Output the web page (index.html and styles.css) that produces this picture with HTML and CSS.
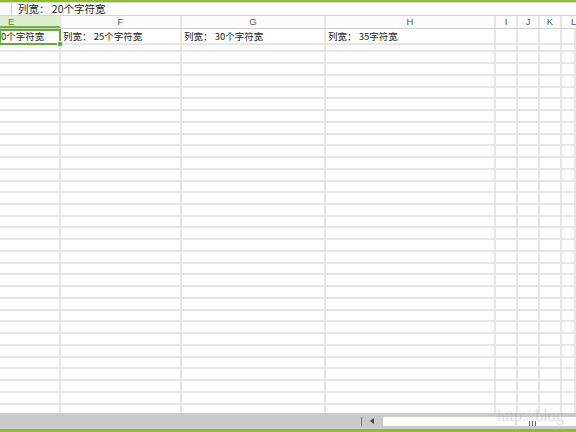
FILE: index.html
```html
<!DOCTYPE html>
<html>
<head>
<meta charset="utf-8">
<link rel="stylesheet" href="styles.css">
</head>
<body>
<div class="app">
  <div class="topbar"></div>
  <div class="formula">
    <div class="fx-left"></div>
    <div class="fx-text">列宽：&nbsp;20个字符宽</div>
  </div>
  <div class="header cols">
    <div class="hc active">E</div><div class="hc">F</div><div class="hc">G</div><div class="hc">H</div><div class="hc">I</div><div class="hc">J</div><div class="hc">K</div><div class="hc last">L</div>
  </div>
  <div class="sheet">
    <div class="row first cols">
      <div class="c sel">0个字符宽<span class="handle"></span></div><div class="c">列宽：&nbsp;25个字符宽</div><div class="c">列宽：&nbsp;30个字符宽</div><div class="c">列宽：&nbsp;35字符宽</div><div class="c"></div><div class="c"></div><div class="c"></div><div class="c"></div>
    </div>
    <div class="row cols"><div class="c"></div><div class="c"></div><div class="c"></div><div class="c"></div><div class="c"></div><div class="c"></div><div class="c"></div><div class="c"></div></div>
    <div class="row cols"><div class="c"></div><div class="c"></div><div class="c"></div><div class="c"></div><div class="c"></div><div class="c"></div><div class="c"></div><div class="c"></div></div>
    <div class="row cols"><div class="c"></div><div class="c"></div><div class="c"></div><div class="c"></div><div class="c"></div><div class="c"></div><div class="c"></div><div class="c"></div></div>
    <div class="row cols"><div class="c"></div><div class="c"></div><div class="c"></div><div class="c"></div><div class="c"></div><div class="c"></div><div class="c"></div><div class="c"></div></div>
    <div class="row cols"><div class="c"></div><div class="c"></div><div class="c"></div><div class="c"></div><div class="c"></div><div class="c"></div><div class="c"></div><div class="c"></div></div>
    <div class="row cols"><div class="c"></div><div class="c"></div><div class="c"></div><div class="c"></div><div class="c"></div><div class="c"></div><div class="c"></div><div class="c"></div></div>
    <div class="row cols"><div class="c"></div><div class="c"></div><div class="c"></div><div class="c"></div><div class="c"></div><div class="c"></div><div class="c"></div><div class="c"></div></div>
    <div class="row cols"><div class="c"></div><div class="c"></div><div class="c"></div><div class="c"></div><div class="c"></div><div class="c"></div><div class="c"></div><div class="c"></div></div>
    <div class="row cols"><div class="c"></div><div class="c"></div><div class="c"></div><div class="c"></div><div class="c"></div><div class="c"></div><div class="c"></div><div class="c"></div></div>
    <div class="row cols"><div class="c"></div><div class="c"></div><div class="c"></div><div class="c"></div><div class="c"></div><div class="c"></div><div class="c"></div><div class="c"></div></div>
    <div class="row cols"><div class="c"></div><div class="c"></div><div class="c"></div><div class="c"></div><div class="c"></div><div class="c"></div><div class="c"></div><div class="c"></div></div>
    <div class="row cols"><div class="c"></div><div class="c"></div><div class="c"></div><div class="c"></div><div class="c"></div><div class="c"></div><div class="c"></div><div class="c"></div></div>
    <div class="row cols"><div class="c"></div><div class="c"></div><div class="c"></div><div class="c"></div><div class="c"></div><div class="c"></div><div class="c"></div><div class="c"></div></div>
    <div class="row cols"><div class="c"></div><div class="c"></div><div class="c"></div><div class="c"></div><div class="c"></div><div class="c"></div><div class="c"></div><div class="c"></div></div>
    <div class="row cols"><div class="c"></div><div class="c"></div><div class="c"></div><div class="c"></div><div class="c"></div><div class="c"></div><div class="c"></div><div class="c"></div></div>
    <div class="row cols"><div class="c"></div><div class="c"></div><div class="c"></div><div class="c"></div><div class="c"></div><div class="c"></div><div class="c"></div><div class="c"></div></div>
    <div class="row cols"><div class="c"></div><div class="c"></div><div class="c"></div><div class="c"></div><div class="c"></div><div class="c"></div><div class="c"></div><div class="c"></div></div>
    <div class="row cols"><div class="c"></div><div class="c"></div><div class="c"></div><div class="c"></div><div class="c"></div><div class="c"></div><div class="c"></div><div class="c"></div></div>
    <div class="row cols"><div class="c"></div><div class="c"></div><div class="c"></div><div class="c"></div><div class="c"></div><div class="c"></div><div class="c"></div><div class="c"></div></div>
    <div class="row cols"><div class="c"></div><div class="c"></div><div class="c"></div><div class="c"></div><div class="c"></div><div class="c"></div><div class="c"></div><div class="c"></div></div>
    <div class="row cols"><div class="c"></div><div class="c"></div><div class="c"></div><div class="c"></div><div class="c"></div><div class="c"></div><div class="c"></div><div class="c"></div></div>
    <div class="row cols"><div class="c"></div><div class="c"></div><div class="c"></div><div class="c"></div><div class="c"></div><div class="c"></div><div class="c"></div><div class="c"></div></div>
    <div class="row cols"><div class="c"></div><div class="c"></div><div class="c"></div><div class="c"></div><div class="c"></div><div class="c"></div><div class="c"></div><div class="c"></div></div>
    <div class="row cols"><div class="c"></div><div class="c"></div><div class="c"></div><div class="c"></div><div class="c"></div><div class="c"></div><div class="c"></div><div class="c"></div></div>
    <div class="row cols"><div class="c"></div><div class="c"></div><div class="c"></div><div class="c"></div><div class="c"></div><div class="c"></div><div class="c"></div><div class="c"></div></div>
    <div class="row cols"><div class="c"></div><div class="c"></div><div class="c"></div><div class="c"></div><div class="c"></div><div class="c"></div><div class="c"></div><div class="c"></div></div>
    <div class="row cols"><div class="c"></div><div class="c"></div><div class="c"></div><div class="c"></div><div class="c"></div><div class="c"></div><div class="c"></div><div class="c"></div></div>
    <div class="row cols"><div class="c"></div><div class="c"></div><div class="c"></div><div class="c"></div><div class="c"></div><div class="c"></div><div class="c"></div><div class="c"></div></div>
    <div class="row cols"><div class="c"></div><div class="c"></div><div class="c"></div><div class="c"></div><div class="c"></div><div class="c"></div><div class="c"></div><div class="c"></div></div>
    <div class="row cols"><div class="c"></div><div class="c"></div><div class="c"></div><div class="c"></div><div class="c"></div><div class="c"></div><div class="c"></div><div class="c"></div></div>
    <div class="row cols"><div class="c"></div><div class="c"></div><div class="c"></div><div class="c"></div><div class="c"></div><div class="c"></div><div class="c"></div><div class="c"></div></div>
    <div class="row cols"><div class="c"></div><div class="c"></div><div class="c"></div><div class="c"></div><div class="c"></div><div class="c"></div><div class="c"></div><div class="c"></div></div>
    <div class="row cols"><div class="c"></div><div class="c"></div><div class="c"></div><div class="c"></div><div class="c"></div><div class="c"></div><div class="c"></div><div class="c"></div></div>
  </div>
  <div class="scrollbar">
    <div class="sb-sep"></div>
    <div class="sb-arrow"></div>
    <div class="sb-track"><span class="grip"></span><span class="grip"></span><span class="grip"></span></div>
    <div class="watermark">http://blog</div>
  </div>
  <div class="bottombar"></div>
</div>
</body>
</html>
```
FILE: styles.css
```css
html, body {
  margin: 0;
  padding: 0;
  background: #ffffff;
}
.app {
  width: 576px;
  height: 432px;
  display: flex;
  flex-direction: column;
  overflow: hidden;
  font-family: "Noto Sans CJK SC", "Noto Sans", sans-serif;
  color: #222;
}
.topbar {
  height: 2px;
  background: #8cc11f;
  border-bottom: 1px solid #d8d8d8;
  flex: none;
}
.formula {
  height: 12px;
  flex: none;
  display: flex;
  align-items: center;
  border-bottom: 1px solid #d4d4d4;
}
.fx-left {
  width: 11px;
  height: 12px;
  border-right: 1px solid #c8c8c8;
  background: #fafafa;
}
.fx-text {
  padding-left: 6px;
  font-size: 10.5px;
  line-height: 12px;
  color: #222;
  white-space: nowrap;
}
.cols {
  display: grid;
  grid-template-columns: 61px 121px 144px 170px 22px 22px 22px 1fr;
}
.header {
  height: 13px;
  flex: none;
  background: #fbfbfb;
  border-bottom: 1px solid #d0d0d0;
  box-sizing: border-box;
}
.hc {
  font-family: "Liberation Sans", "Noto Sans", sans-serif;
  font-size: 9.5px;
  line-height: 12px;
  text-align: center;
  color: #555555;
  border-right: 2px solid #e6e6e6;
}
.hc.last {
  border-right: none;
  text-align: left;
  padding-left: 9px;
}
.hc.active {
  background: #dcefcf;
  color: #3f9a1a;
  border-bottom: 2px solid #6cb53a;
  height: 12px;
  box-sizing: border-box;
  line-height: 11px;
  text-align: left;
  padding-left: 8px;
}
.sheet {
  flex: 1;
  overflow: hidden;
  display: flex;
  flex-direction: column;
}
.row {
  height: 11.74px;
  flex: none;
}
.c {
  border-right: 2px solid #e6e6e6;
  border-bottom: 2px solid #e6e6e6;
  font-size: 9.5px;
  line-height: 14px;
  padding-left: 2px;
  white-space: nowrap;
  color: #222;
}
.c.sel {
  position: relative;
  padding-left: 0;
  border: 2px solid #5fae2e;
  border-left-width: 1px;
  line-height: 10px;
}
.handle {
  position: absolute;
  right: -4px;
  bottom: -4px;
  width: 4px;
  height: 4px;
  background: #5fae2e;
  border: 1px solid #fff;
  z-index: 2;
}
.scrollbar {
  height: 16px;
  flex: none;
  background: #cbcbcb;
  display: flex;
  align-items: center;
  position: relative;
}
.sb-sep {
  margin-left: 361px;
  width: 1px;
  height: 9px;
  background: #7d7d7d;
}
.sb-arrow {
  margin-left: 8px;
  width: 0;
  height: 0;
  border-top: 3px solid transparent;
  border-bottom: 3px solid transparent;
  border-right: 4px solid #444;
}
.sb-track {
  margin-left: 9px;
  flex: 1;
  height: 9px;
  background: #ffffff;
  display: flex;
  align-items: flex-end;
  padding-left: 146px;
  gap: 2px;
}
.grip {
  width: 1px;
  height: 5px;
  background: #666;
}
.watermark {
  position: absolute;
  left: 497px;
  top: -6px;
  font-family: "Liberation Serif", serif;
  font-size: 16px;
  color: rgba(170, 170, 170, 0.45);
  white-space: nowrap;
  pointer-events: none;
}
.bottombar {
  height: 3px;
  flex: none;
  background: #8cc11f;
}
```
